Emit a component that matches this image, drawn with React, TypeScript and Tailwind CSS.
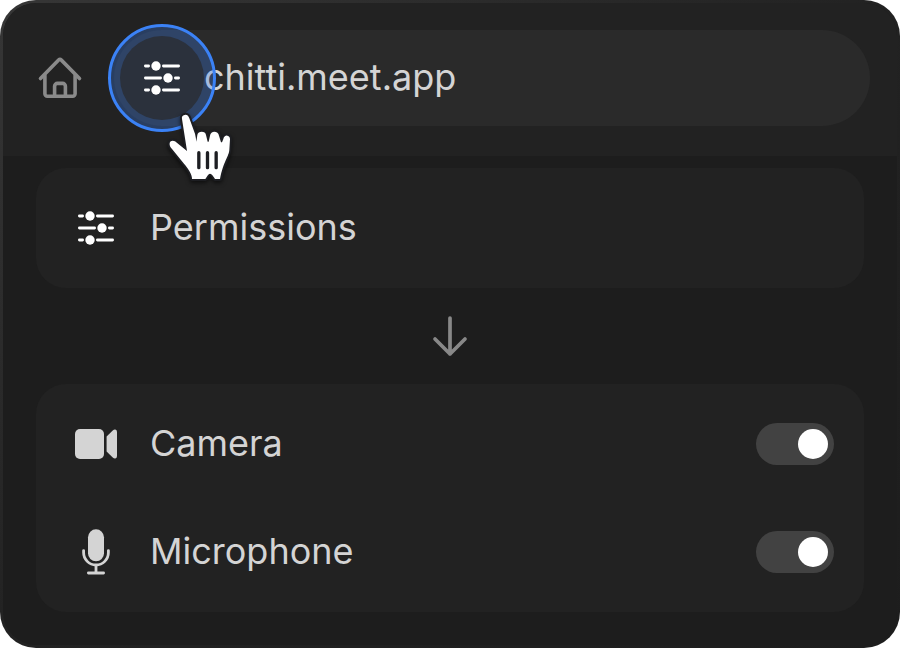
import { useState } from "react";

function SlidersIcon() {
  return (
    <svg viewBox="0 0 36 36" className="size-9 overflow-visible text-white" aria-hidden="true">
      <g stroke="currentColor" strokeWidth="2.8" strokeLinecap="round">
        <path d="M1.4 6H4.6M19.4 6H34.6M1.4 18H16.6M31.4 18H34.6M1.4 30H4.6M19.4 30H34.6" />
      </g>
      <g fill="currentColor">
        <circle cx="12" cy="6" r="4.7" />
        <circle cx="24" cy="18" r="4.7" />
        <circle cx="12" cy="30" r="4.7" />
      </g>
    </svg>
  );
}

function HomeIcon() {
  return (
    <svg viewBox="0 0 48 48" className="size-12" fill="none" stroke="#8a8a8a" strokeWidth="3.6" strokeLinecap="round" strokeLinejoin="round" aria-hidden="true">
      <path d="M4.5 24.5 22.6 6.1a2 2 0 0 1 2.8 0L43.5 24.5" />
      <path d="M8.9 21.5V39.8a2.4 2.4 0 0 0 2.4 2.4H36.7a2.4 2.4 0 0 0 2.4-2.4V21.5" />
      <path d="M18.6 41.8V32.2a2.8 2.8 0 0 1 2.8-2.8h5.2a2.8 2.8 0 0 1 2.8 2.8V41.8" />
    </svg>
  );
}

function ArrowIcon() {
  return (
    <svg viewBox="0 0 48 48" className="size-12" fill="none" stroke="#888888" strokeWidth="3.7" strokeLinecap="round" strokeLinejoin="round" aria-hidden="true">
      <path d="M24 6V42M9 27 24 42 39 27" />
    </svg>
  );
}

function CameraIcon() {
  return (
    <svg viewBox="0 0 48 48" className="size-12" fill="#d4d4d4" aria-hidden="true">
      <rect x="3" y="9" width="29" height="30" rx="5" />
      <path d="M34.6 16.6 41 10.2Q42 9.3 43.3 9.5 45 9.8 45 12V36Q45 38.2 43.3 38.5 42 38.7 41 37.8L34.6 31.4Z" />
    </svg>
  );
}

function MicIcon() {
  return (
    <svg viewBox="0 0 48 48" className="size-12" fill="none" stroke="#d4d4d4" strokeWidth="2.8" strokeLinecap="round" aria-hidden="true">
      <rect x="16" y="1.3" width="16" height="32" rx="8" fill="#d4d4d4" stroke="none" />
      <path d="M11.6 22.6V24.6a12.4 12.4 0 0 0 24.8 0V22.6M24 37.4V45M16.4 45H31.6" />
    </svg>
  );
}

function HandCursor() {
  return (
    <svg viewBox="0 0 240 255" className="pointer-events-none absolute left-[46px] top-[75px] h-[85px] w-20 overflow-visible drop-shadow-[0_2px_2px_rgba(0,0,0,0.6)]" aria-hidden="true">
      <path
        d="M66 42C64 34 69 30 76 29 83 29 86 34 88 40L105 86Q108 99 109 110L112 90C113 83 119 80 125 80 132 80 137 83 138 90L143 110H146L150 92C151 84 157 80 163 80 170 80 176 84 177 92L183 112H186L190 102C191 95 197 91 202 92 208 93 210 97 210 103L208 135C207 153 190 170 180 222H165C161 214 155 206 150 206 145 206 141 214 136 222H96C97 209 84 190 72 176L36 132C30 126 28 120 29 114 31 107 38 105 45 109L81 138Z"
        fill="white"
        stroke="#1d1e22"
        strokeWidth="12"
        strokeLinejoin="round"
        paintOrder="stroke"
      />
      <path d="M116.5 143V188M142.5 143V188M168.5 143V188" stroke="#1d1e22" strokeWidth="10" strokeLinecap="round" />
    </svg>
  );
}

function PermissionRow({ id, label, icon }: { id: string; label: string; icon: React.ReactNode }) {
  const [on, setOn] = useState(true);
  return (
    <label htmlFor={id} className="flex h-[42px] items-center">
      {icon}
      <span className="ml-[30px] flex-1 pb-0.5">{label}</span>
      <input
        id={id}
        type="checkbox"
        role="switch"
        checked={on}
        onChange={(e) => setOn(e.target.checked)}
        className="h-[42px] w-[78px] appearance-none rounded-full bg-[#424242] p-1.5 before:block before:size-[30px] before:rounded-full before:bg-white checked:before:ml-9"
      />
    </label>
  );
}

export default function App() {
  return (
    <main className="min-h-screen bg-white font-['Inter',sans-serif] text-4xl text-[#d4d4d4]">
      <div className="flex min-h-screen flex-col rounded-[36px] bg-linear-to-br from-[#363636] via-[#222222] to-[#1d1d1d] p-[3px]">
        <div className="flex-1 overflow-hidden rounded-[33px] bg-[#1d1d1d]">
          <header className="flex h-[153px] items-center bg-[#222222] pb-[3px] pl-[33px] pr-[27px]">
            <button type="button" aria-label="Home">
              <HomeIcon />
            </button>
            <div className="relative ml-[30px] flex h-24 flex-1 items-center rounded-full bg-[#2a2a2a]">
              <input
                type="text"
                aria-label="Address"
                defaultValue="chitti.meet.app"
                className="ml-[90px] h-full min-w-0 flex-1 bg-transparent pb-0.5 pr-8 outline-none [font-optical-sizing:none]"
              />
              <button
                type="button"
                aria-label="Site settings"
                className="absolute -left-1.5 -top-1.5 flex size-[108px] items-center justify-center rounded-full border-[3px] border-[#3b82f6] bg-[#3b82f6]/30"
              >
                <span className="flex size-[84px] items-center justify-center rounded-full bg-[#2b313c]">
                  <SlidersIcon />
                </span>
              </button>
              <HandCursor />
            </div>
          </header>
          <section className="px-[33px] pb-[33px] pt-3">
            <div className="flex h-[120px] items-center rounded-[30px] bg-[#222222] px-[30px]">
              <button type="button" className="flex items-center">
                <span className="flex w-[60px] justify-center">
                  <SlidersIcon />
                </span>
                <span className="ml-6 pb-0.5">Permissions</span>
              </button>
            </div>
            <div className="flex h-24 items-center justify-center">
              <ArrowIcon />
            </div>
            <div className="flex flex-col gap-[66px] rounded-[30px] bg-[#222222] py-[39px] pl-9 pr-[30px]">
              <PermissionRow id="camera" label="Camera" icon={<CameraIcon />} />
              <PermissionRow id="microphone" label="Microphone" icon={<MicIcon />} />
            </div>
          </section>
        </div>
      </div>
    </main>
  );
}
